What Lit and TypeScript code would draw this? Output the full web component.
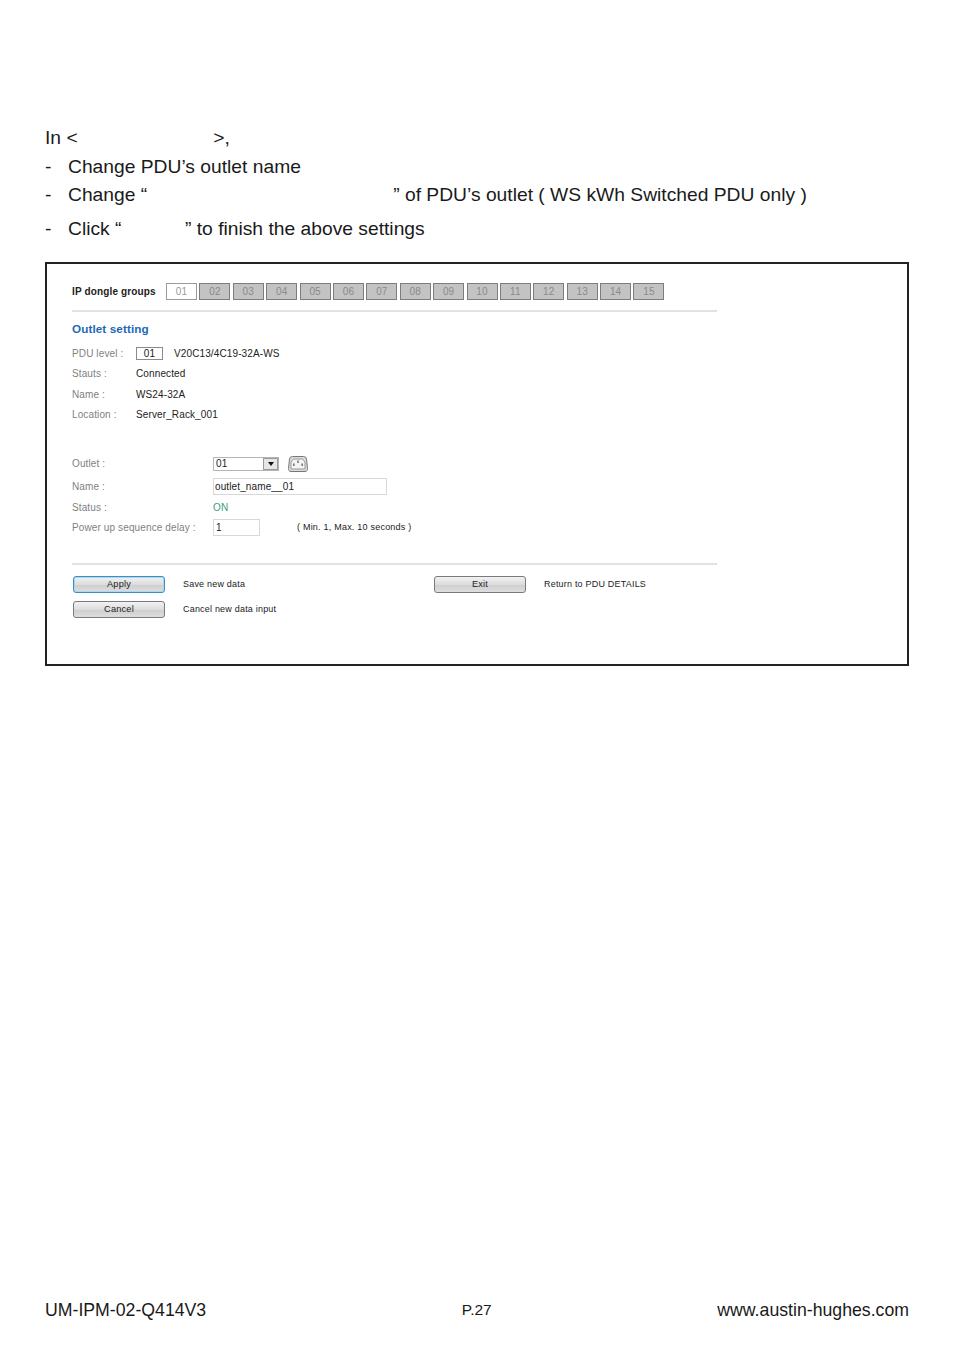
import { LitElement, html, css } from "lit";
import { customElement } from "lit/decorators.js";

const groups = ["01","02","03","04","05","06","07","08","09","10","11","12","13","14","15"];

@customElement("app-root")
export class AppRoot extends LitElement {
  static styles = css`
    :host { display: block; width: 954px; height: 1350px; background: #fff; font-family: "Liberation Sans", Arial, sans-serif; color: #1a1a1a; position: relative; overflow: hidden; }
    .page { display: flex; flex-direction: column; height: 1350px; box-sizing: border-box; padding: 124px 45px 29px; }
    .doc { font-size: 19.25px; line-height: 28.5px; }
    .doc .line { display: flex; height: 28.5px; white-space: pre; }
    .doc .line.gap { margin-top: 5px; }
    .dash { width: 23px; }
    .sp { display: inline-block; }
    .sp1 { width: 135.5px; }
    .sp2 { width: 246px; }
    .sp3 { width: 63.5px; }
    .frame { margin-top: 19px; width: 864px; height: 404px; box-sizing: border-box; border: 2px solid #222; padding: 18px 0 0 25px; font-size: 10px; color: #222; letter-spacing: 0.12px; }
    .groups { display: flex; align-items: center; width: 645px; height: 18px; }
    .groups b { width: 94px; font-size: 10px; color: #222; letter-spacing: 0.14px; }
    .tabs { display: flex; gap: 2.4px; }
    .tab { width: 31px; height: 17px; box-sizing: border-box; border: 1px solid #7d7d7d; background: #c3c3c3; color: #8a8a8a; text-align: center; line-height: 15px; font-size: 10px; }
    .tab.first { background: #fff; border-color: #9a9a9a; color: #999; }
    .rule { width: 645px; height: 2px; background: #e2e2e2; }
    .r1 { margin-top: 10px; }
    h2 { margin: 9px 0 7.4px; font-size: 11.7px; line-height: 15px; font-weight: bold; color: #1c69b4; letter-spacing: 0.1px; }
    .row { display: flex; align-items: center; height: 20.4px; }
    .lab { color: #7f7f7f; }
    .a { width: 64px; }
    .lvl { width: 27px; height: 13px; box-sizing: border-box; border: 1px solid #8a8a8a; text-align: center; line-height: 11px; margin-right: 11px; color: #222; }
    .second { margin-top: 27.1px; }
    .h23 { height: 23px; }
    .h22 { height: 22px; }
    .h20 { height: 20px; }
    .b { width: 141px; }
    .select { width: 66px; height: 14px; box-sizing: border-box; border: 1px solid #b5b5b5; display: flex; justify-content: space-between; align-items: center; padding-left: 2px; color: #222; }
    .arrow { width: 15px; height: 12px; box-sizing: border-box; background: #e6e6e6; border: 1px solid #9a9a9a; display: flex; align-items: center; justify-content: center; }
    .arrow::after { content: ""; border: 3px solid transparent; border-top: 4px solid #111; border-bottom: 0; }
    .plug { margin-left: 9px; }
    .input { box-sizing: border-box; border: 1px solid #d8d8d8; padding-left: 1px; color: #222; display: flex; align-items: center; }
    .in-name { width: 174px; height: 17px; }
    .in-delay { width: 47px; height: 17px; margin-right: 37px; padding-left: 2px; }
    .status-on { color: #3f9c7a; }
    .hint { font-size: 9px; letter-spacing: 0.22px; color: #222; }
    .r2 { margin-top: 25.5px; }
    .actions { display: grid; grid-template-columns: 361px 1fr; margin: 11px 0 0 1px; width: 644px; }
    .act { display: flex; align-items: center; height: 17px; margin-bottom: 8px; font-size: 9px; letter-spacing: 0.2px; color: #222; }
    .btn { width: 92px; height: 17px; box-sizing: border-box; border: 1px solid #7a7a7a; border-radius: 3px; background: linear-gradient(#f2f2f2, #dcdcdc 50%, #cfcfcf 55%, #dedede); text-align: center; line-height: 14px; font-size: 9.2px; margin-right: 18px; color: #222; }
    .btn.pri { border-color: #3c8fc4; box-shadow: inset 0 0 0 1px #a9d8f0; }
    .foot { margin-top: auto; display: flex; justify-content: space-between; align-items: center; font-size: 17.7px; line-height: 21px; }
    .foot .mid { font-size: 15.5px; position: relative; left: 15px; bottom: 1px; }
  `;

  render() {
    return html`<div class="page">
      <div class="doc">
        <div class="line">In &lt;<span class="sp sp1"></span>&gt;,</div>
        <div class="line"><span class="dash">-</span>Change PDU’s outlet name</div>
        <div class="line"><span class="dash">-</span>Change “<span class="sp sp2"></span>” of PDU’s outlet ( WS kWh Switched PDU only )</div>
        <div class="line gap"><span class="dash">-</span>Click “<span class="sp sp3"></span>” to finish the above settings</div>
      </div>
      <div class="frame">
        <div class="groups"><b>IP dongle groups</b>
          <div class="tabs">${groups.map((g, i) => html`<div class="tab ${i === 0 ? "first" : ""}">${g}</div>`)}</div>
        </div>
        <div class="rule r1"></div>
        <h2>Outlet setting</h2>
        <div class="row"><span class="lab a">PDU level :</span><span class="lvl">01</span><span>V20C13/4C19-32A-WS</span></div>
        <div class="row"><span class="lab a">Stauts :</span><span>Connected</span></div>
        <div class="row"><span class="lab a">Name :</span><span>WS24-32A</span></div>
        <div class="row"><span class="lab a">Location :</span><span>Server_Rack_001</span></div>
        <div class="second">
          <div class="row h23"><span class="lab b">Outlet :</span>
            <div class="select">01<span class="arrow"></span></div>
            <svg class="plug" width="20" height="16" viewBox="0 0 20 16" fill="none">
              <path d="M4.5 0.5h11a3 3 0 0 1 3 2.5l1 9.5a2.5 2.5 0 0 1-2.5 3h-14a2.5 2.5 0 0 1-2.5-3l1-9.5a3 3 0 0 1 3-2.5z" fill="#dcdcdc" stroke="#777"/>
              <path d="M5.5 3h9l2.5 3v7h-14V6z" fill="#f4f4f4" stroke="#999"/>
              <rect x="5" y="7.5" width="1.6" height="2.5" fill="#777"/>
              <rect x="9.2" y="4.5" width="1.6" height="2.5" fill="#777"/>
              <rect x="13.4" y="7.5" width="1.6" height="2.5" fill="#777"/>
            </svg>
          </div>
          <div class="row h22"><span class="lab b">Name :</span><div class="input in-name">outlet_name__01</div></div>
          <div class="row h20"><span class="lab b">Status :</span><span class="status-on">ON</span></div>
          <div class="row h20"><span class="lab b">Power up sequence delay :</span><div class="input in-delay">1</div><span class="hint">( Min. 1, Max. 10 seconds )</span></div>
        </div>
        <div class="rule r2"></div>
        <div class="actions">
          <div class="act"><span class="btn pri">Apply</span>Save new data</div>
          <div class="act"><span class="btn">Exit</span>Return to PDU DETAILS</div>
          <div class="act"><span class="btn">Cancel</span>Cancel new data input</div>
        </div>
      </div>
      <div class="foot"><span>UM-IPM-02-Q414V3</span><span class="mid">P.27</span><span>www.austin-hughes.com</span></div>
    </div>`;
  }
}
